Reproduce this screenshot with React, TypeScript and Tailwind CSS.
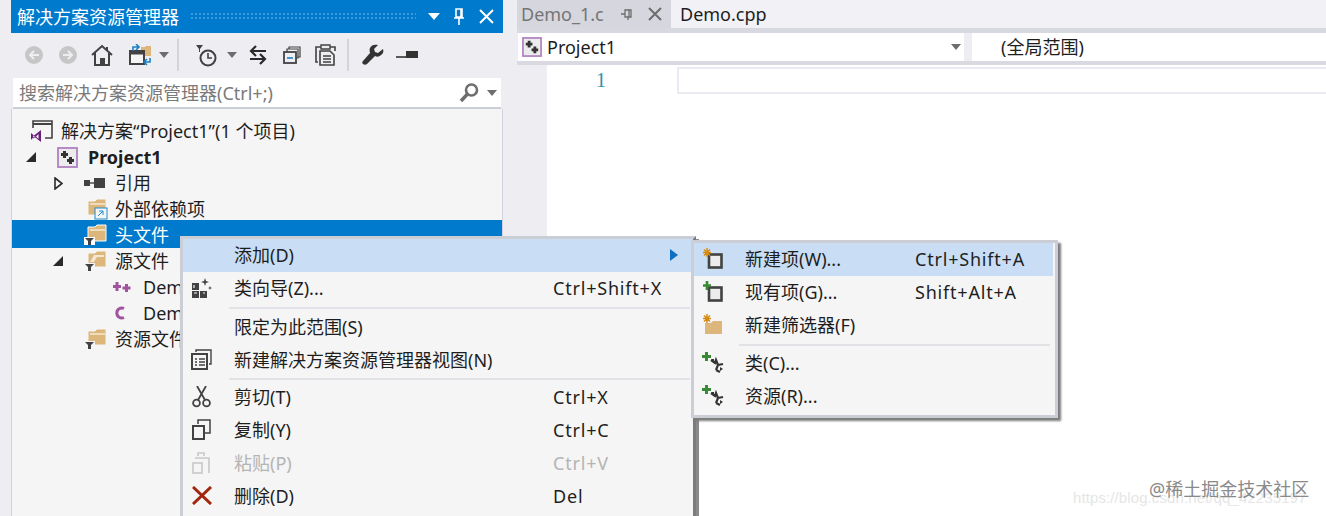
import React from "react";

const D = "#424242";
const FONT = 'font-["Noto_Sans","Noto_Sans_CJK_SC",sans-serif]';

function Caret({ x, c = "#6d6d6d" }: { x: string; c?: string }) {
  return (
    <svg width="10" height="6" viewBox="0 0 10 6" className={x}>
      <path d="M0 0h10L5 6z" fill={c} />
    </svg>
  );
}

function Folder({
  filter,
  link,
  selected,
  open,
}: {
  filter?: boolean;
  link?: boolean;
  selected?: boolean;
  open?: boolean;
}) {
  return (
    <svg width="24" height="22" viewBox="0 0 24 22">
      <path d="M4 3h7l2-2h9v16H4z" fill="#dcb67a" stroke={selected ? "#fff" : "#f5f5f5"} strokeWidth="1" />
      {open ? (
        <path d="M6 12l4-7h10v2h-7l-3 5z" fill="#f3e7d2" />
      ) : (
        <path d="M6 6h15" stroke="#efdcbb" strokeWidth="2" />
      )}
      {filter && (
        <>
          <rect x="0" y="13" width="11" height="8" fill={selected ? "#fff" : "#f5f5f5"} />
          <path d="M1 14h9L7 17v4H4v-4z" fill="#424242" />
        </>
      )}
      {link && (
        <>
          <rect x="11" y="10" width="12" height="11" fill="#f5f5f5" stroke="#1f8ad2" />
          <path d="M14 18l5-5M15 13h4v4" stroke="#1f8ad2" fill="none" />
        </>
      )}
    </svg>
  );
}

function ProjectIcon({ size = 21 }: { size?: number }) {
  return (
    <svg width={size} height={size} viewBox="0 0 21 21">
      <rect x="1" y="1" width="19" height="19" fill="#ececec" stroke="#b180c0" strokeWidth="1.800" />
      <path d="M7.500 4v7M4 7.500h7M13.500 10v7M10 13.500h7" stroke="#333" strokeWidth="3" />
    </svg>
  );
}

function BranchPlus() {
  return (
    <svg width="22" height="21" viewBox="0 0 22 21">
      <path d="M4.500 0v9M0 4.500h9" stroke="#388a34" strokeWidth="3" />
      <path d="M9 8l4 3 1-3 2 5-2 5M14 18l4 2M16 13l5-1" stroke="#333" strokeWidth="2.200" fill="none" />
      <path d="M9 7l3 0 0 3zM18 15l3 2-3 2z" fill="#333" />
    </svg>
  );
}

function TreeRow({
  pad,
  arrow,
  icon,
  label,
  cls = "",
}: {
  pad: string;
  arrow?: React.ReactNode;
  icon: React.ReactNode;
  label: React.ReactNode;
  cls?: string;
}) {
  return (
    <div className={`h-[26px] flex items-center ${pad} ${cls}`}>
      <div className="w-[10px] -ml-[31px] mr-[21px] shrink-0 flex justify-center">{arrow}</div>
      <div className="w-[31px] shrink-0 flex justify-start">{icon}</div>
      <span className="whitespace-nowrap">{label}</span>
    </div>
  );
}

const Solid = () => (
  <svg width="10" height="10" viewBox="0 0 10 10" className="shrink-0">
    <path d="M10 0v10H0z" fill="#2a2a2a" />
  </svg>
);

function MenuRow({
  icon,
  label,
  sc,
  active,
  disabled,
  w,
  arrow,
}: {
  icon?: React.ReactNode;
  label: string;
  sc?: string;
  active?: boolean;
  disabled?: boolean;
  w: string;
  arrow?: boolean;
}) {
  return (
    <div
      className={`h-[33px] pb-[2px] flex items-center relative ${active ? "bg-[#c9def5]" : ""} ${
        disabled ? "text-[#b4b4b4]" : "text-[#1e1e1e]"
      }`}
    >
      <div className="w-[37px] mr-[14px] shrink-0 flex justify-center">{icon}</div>
      <div className={`${w} shrink-0 whitespace-nowrap`}>{label}</div>
      <div className="whitespace-nowrap tracking-[0.8px]">{sc}</div>
      {arrow && (
        <svg width="8" height="12" viewBox="0 0 8 12" className="absolute right-[15px] top-[10px]">
          <path d="M0 0l8 6-8 6z" fill="#0e70c0" />
        </svg>
      )}
    </div>
  );
}

const Sep = ({ ml, h }: { ml: string; h: string }) => (
  <div className={`${h} flex items-center ${ml} mr-[3px]`}>
    <div className="h-[2px] w-full bg-[#e2e2e6]" />
  </div>
);

export default function App() {
  return (
    <div className={`relative w-[1326px] h-[516px] overflow-hidden flex bg-[#eeeef2] text-[18px] leading-[26px] text-[#1e1e1e] ${FONT}`}>
      {/* left panel */}
      <div className="ml-[11px] w-[492px] h-full flex flex-col shrink-0">
        <div className="h-[33px] bg-[#007acc] flex items-center text-white">
          <span className="ml-[6px] whitespace-nowrap">解决方案资源管理器</span>
          <div className="ml-[11px] w-[226px] h-[9px] bg-[radial-gradient(#3f9bd8_1px,transparent_1px)] bg-[length:4px_4px]" />
          <svg width="12" height="7" viewBox="0 0 12 7" className="ml-[12px]">
            <path d="M0 0h12L6 7z" fill="#fff" />
          </svg>
          <svg width="12" height="18" viewBox="0 0 12 18" className="ml-[13px]">
            <path d="M3 1h6v8H3zM1 10h10M6 10v7M8 1v8" stroke="#fff" strokeWidth="1.600" fill="none" />
          </svg>
          <svg width="15" height="15" viewBox="0 0 15 15" className="ml-[14px]">
            <path d="M1 1l13 13M14 1L1 14" stroke="#fff" strokeWidth="2" />
          </svg>
        </div>
        {/* toolbar */}
        <div className="h-[44px] flex items-center pl-[14px]">
          <svg width="18" height="18" viewBox="0 0 18 18">
            <circle cx="9" cy="9" r="9" fill="#c6c6c6" />
            <path d="M14 9H6M9 5L5 9l4 4" stroke="#eeeef2" strokeWidth="2" fill="none" />
          </svg>
          <svg width="18" height="18" viewBox="0 0 18 18" className="ml-[16px]">
            <circle cx="9" cy="9" r="9" fill="#c6c6c6" />
            <path d="M4 9h8M9 5l4 4-4 4" stroke="#eeeef2" strokeWidth="2" fill="none" />
          </svg>
          <svg width="22" height="22" viewBox="0 0 22 22" className="ml-[14px]">
            <path d="M1 11L11 2l10 9M4 9v12h14V9" stroke={D} strokeWidth="2" fill="none" />
            <rect x="9" y="14" width="5" height="7" fill={D} />
            <path d="M16 3v4" stroke={D} strokeWidth="2" />
          </svg>
          <svg width="24" height="22" viewBox="0 0 24 22" className="ml-[16px]">
            <path d="M12 3h4l1-1h5v10H12z" fill="#dcb67a" />
            <rect x="1" y="7" width="14" height="13" fill="#f5f5f5" stroke={D} strokeWidth="2" />
            <path d="M1 9h14" stroke={D} strokeWidth="3" />
            <path d="M4 7V3h5M7 0l3 3-3 3" stroke="#1b7fc4" strokeWidth="1.600" fill="none" />
            <path d="M21 14v4h-5M18 15l-3 3 3 3" stroke="#1b7fc4" strokeWidth="1.600" fill="none" />
          </svg>
          <Caret x="ml-[6px]" />
          <div className="ml-[8px] w-[2px] h-[32px] bg-[#d4d4da]" />
          <svg width="22" height="24" viewBox="0 0 22 24" className="ml-[17px] mt-[2px]">
            <path d="M0 1h7L4 5v3H3V5z" fill={D} />
            <circle cx="12" cy="14" r="7.500" stroke={D} strokeWidth="2" fill="none" />
            <path d="M12 9v5h4" stroke={D} strokeWidth="1.600" fill="none" />
          </svg>
          <Caret x="ml-[9px]" />
          <svg width="18" height="20" viewBox="0 0 18 20" className="ml-[12px]">
            <path d="M17 6H3M7 1L2 6l5 5" stroke="#2a2a2a" strokeWidth="2.200" fill="none" />
            <path d="M1 14h14M11 9l5 5-5 5" stroke="#2a2a2a" strokeWidth="2.200" fill="none" />
          </svg>
          <svg width="18" height="18" viewBox="0 0 18 18" className="ml-[16px]">
            <path d="M6 3V1h11v10h-2" stroke={D} strokeWidth="1.200" fill="none" />
            <path d="M4 6V3h11v9h-2" stroke={D} strokeWidth="1.200" fill="none" />
            <rect x="1" y="6" width="12" height="11" fill="#eeeef2" stroke={D} strokeWidth="1.800" />
            <path d="M4 12h6" stroke="#1b7fc4" strokeWidth="1.600" />
          </svg>
          <svg width="21" height="22" viewBox="0 0 21 22" className="ml-[14px]">
            <path d="M3 18H1V3h5M15 3h5v4" stroke={D} strokeWidth="1.600" fill="none" />
            <path d="M6 1h9v4H6z" stroke={D} strokeWidth="1.400" fill="none" />
            <path d="M5 7h10l4 4v10H5z" fill="#eeeef2" stroke={D} strokeWidth="1.600" />
            <path d="M8 12h8M8 15h8M8 18h8" stroke={D} strokeWidth="1.300" />
          </svg>
          <div className="ml-[11px] w-[2px] h-[32px] bg-[#d4d4da]" />
          <svg width="22" height="22" viewBox="0 0 22 22" className="ml-[13px]">
            <path
              d="M21 5l-5 4-3-1-1-3 4-4c-3-1-7 0-8 3-1 2 0 4 0 5L1 17c-1 1-1 2 0 3s3 1 4 0l8-8c2 1 4 1 6-1 2-1 3-4 2-6z"
              fill="#333"
            />
          </svg>
          <svg width="22" height="8" viewBox="0 0 22 8" className="ml-[12px]">
            <path d="M0 6h10" stroke="#333" strokeWidth="1.600" />
            <rect x="10" y="0" width="12" height="7" fill="#333" />
          </svg>
        </div>
        {/* search */}
        <div className="mt-[1px] mx-[2px] h-[31px] bg-white border-b-[2px] border-[#ccced6] flex items-center text-[#7a7a7a]">
          <span className="ml-[6px] whitespace-nowrap">搜索解决方案资源管理器(Ctrl+;)</span>
          <svg width="20" height="20" viewBox="0 0 20 20" className="ml-auto">
            <circle cx="12.500" cy="7" r="5.500" stroke="#6d6d6d" strokeWidth="2.600" fill="none" />
            <path d="M8.500 11L2 18" stroke="#6d6d6d" strokeWidth="3.400" />
          </svg>
          <Caret x="ml-[8px] mr-[4px]" />
        </div>
        {/* tree */}
        <div className="flex-1 bg-[#f5f5f5] pt-[9px] border-x border-[#d2d3df]">
          <TreeRow
            pad="pl-[18px]"
            icon={
              <svg width="23" height="23" viewBox="0 0 23 23">
                <path d="M3 8V1h19v17h-7" stroke="#424242" strokeWidth="1.600" fill="none" />
                <path d="M3 4h19" stroke="#424242" strokeWidth="2" />
                <path d="M1 13l3 2.500L11 10v12l-7-5.500L1 20zM3 15.500v3l2.500-1.500zM8.500 14L6 16.500 8.500 19z" fill="#68217a" fillRule="evenodd" />
              </svg>
            }
            label="解决方案“Project1”(1 个项目)"
          />
          <TreeRow
            pad="pl-[45px]"
            arrow={<Solid />}
            icon={<ProjectIcon />}
            label={<b className="font-bold">Project1</b>}
          />
          <TreeRow
            pad="pl-[72px]"
            arrow={
              <svg width="9" height="13" viewBox="0 0 9 13" className="shrink-0">
                <path d="M1 1l7 5.500L1 12z" fill="none" stroke="#2a2a2a" strokeWidth="1.600" />
              </svg>
            }
            icon={
              <svg width="22" height="10" viewBox="0 0 22 10">
                <rect x="0" y="2" width="6" height="6" fill={D} />
                <path d="M6 5h4" stroke={D} strokeWidth="1.400" />
                <rect x="10" y="0" width="11" height="10" fill={D} />
              </svg>
            }
            label="引用"
          />
          <TreeRow pad="pl-[72px]" icon={<Folder link />} label="外部依赖项" />
          <div className="-mt-[2px] pt-[2px] bg-[#007acc] text-white">
            <TreeRow pad="pl-[72px]" icon={<Folder filter selected />} label="头文件" />
          </div>
          <TreeRow pad="pl-[72px]" arrow={<Solid />} icon={<Folder filter open />} label="源文件" />
          <TreeRow
            pad="pl-[100px]"
            icon={
              <svg width="20" height="12" viewBox="0 0 20 12">
                <path d="M5 1v9M1 5.500h8M14.500 3v8M10.500 7h8" stroke="#a0549f" strokeWidth="3" />
              </svg>
            }
            label="Demo.cpp"
          />
          <TreeRow
            pad="pl-[100px]"
            icon={
              <svg width="18" height="16" viewBox="0 0 18 16">
                <path d="M12 3.500A5 5 0 1 0 12 12.500" stroke="#a0549f" strokeWidth="3" fill="none" />
              </svg>
            }
            label="Demo_1.c"
          />
          <TreeRow pad="pl-[72px]" icon={<Folder filter />} label="资源文件" />
        </div>
      </div>

      {/* editor */}
      <div className="ml-[14px] flex-1 flex flex-col min-w-0">
        <div className="h-[28px] flex items-center shrink-0 bg-[#f1f1f6]">
          <div className="w-[154px] h-full shrink-0 flex items-center bg-[#d6d6df] text-[#757575]">
            <span className="ml-[4px] whitespace-nowrap">Demo_1.c</span>
            <svg width="14" height="12" viewBox="0 0 14 12" className="ml-[16px] shrink-0">
              <path d="M1 6h4M5 2h6v7H5zM9 2v7M8 9v3" stroke="#6d6d6d" strokeWidth="1.300" fill="none" />
            </svg>
            <svg width="14" height="14" viewBox="0 0 14 14" className="ml-[14px] shrink-0">
              <path d="M1 1l12 12M13 1L1 13" stroke="#6d6d6d" strokeWidth="2" />
            </svg>
          </div>
          <span className="ml-[9px] whitespace-nowrap">Demo.cpp</span>
        </div>
        <div className="h-[33px] shrink-0 flex gap-[8px] border-t-[5px] border-[#d8d8e0]">
          <div className="w-[446px] bg-white flex items-center h-[28px] ml-[1px]">
            <div className="ml-[4px] flex">
              <ProjectIcon size={20} />
            </div>
            <span className="ml-[5px]">Project1</span>
            <Caret x="ml-auto mr-[3px]" />
          </div>
          <div className="flex-1 bg-white flex items-center h-[28px]">
            <span className="ml-[29px] whitespace-nowrap">(全局范围)</span>
          </div>
        </div>
        <div className="h-[4px] bg-[#d9d9e2] shrink-0" />
        <div className="flex-1 flex bg-white">
          <div className="w-[30px] bg-[#eeeef2] shrink-0" />
          <div className="flex-1 relative">
            <div className="w-[59px] pt-[2px] text-right text-[#2b91af] font-['Liberation_Serif',serif] text-[20px]">1</div>
            <div className="absolute left-[130px] right-0 top-[2px] h-[27px] border-2 border-[#eaeaf2] border-r-0" />
          </div>
        </div>
      </div>

      {/* context menu */}
      <div className="absolute left-[180px] top-[236px] w-[516px] h-[290px] bg-[#f5f5f5] border-[3px] border-[#ccced6] border-r-[#7c7c7c] shadow-[3px_3px_0_#8a8a8a]">
        <MenuRow active arrow w="w-[319px]" label="添加(D)" />
        <MenuRow
          w="w-[319px]"
          label="类向导(Z)..."
          sc="Ctrl+Shift+X"
          icon={
            <svg width="20" height="21" viewBox="0 0 20 21">
              <rect x="0" y="6" width="7" height="7" fill={D} />
              <rect x="0" y="14" width="7" height="7" fill={D} />
              <rect x="8" y="14" width="7" height="7" fill={D} />
              <path d="M2 8v3M2 16h3M11 16h2" stroke="#f5f5f5" strokeWidth="1.200" />
              <path d="M13 1l1 3 3 1-3 1-1 3-1-3-3-1 3-1zM18 9l.6 1.400 1.400.6-1.400.6-.6 1.400-.6-1.400-1.400-.6 1.400-.6z" fill={D} />
            </svg>
          }
        />
        <Sep ml="ml-[46px]" h="h-[6px]" />
        <MenuRow w="w-[319px]" label="限定为此范围(S)" />
        <MenuRow
          w="w-[319px]"
          label="新建解决方案资源管理器视图(N)"
          icon={
            <svg width="21" height="21" viewBox="0 0 21 21">
              <path d="M5 3V1h15v14h-2" stroke={D} strokeWidth="1.400" fill="none" />
              <rect x="1" y="5" width="15" height="15" fill="#f5f5f5" stroke={D} strokeWidth="2" />
              <path d="M4 10h2M8 10h6M4 13h2M8 13h6M4 16h2M8 16h6" stroke={D} strokeWidth="1.500" />
            </svg>
          }
        />
        <Sep ml="ml-[46px]" h="h-[4px]" />
        <MenuRow
          w="w-[319px]"
          label="剪切(T)"
          sc="Ctrl+X"
          icon={
            <svg width="19" height="22" viewBox="0 0 19 22">
              <path d="M5 0l8 14M14 0L6 14" stroke={D} strokeWidth="1.800" />
              <circle cx="4.500" cy="17" r="3.400" stroke={D} strokeWidth="1.800" fill="none" />
              <circle cx="14.500" cy="17" r="3.400" stroke={D} strokeWidth="1.800" fill="none" />
            </svg>
          }
        />
        <MenuRow
          w="w-[319px]"
          label="复制(Y)"
          sc="Ctrl+C"
          icon={
            <svg width="19" height="21" viewBox="0 0 19 21">
              <path d="M6 5V1h12v13h-5" stroke={D} strokeWidth="1.500" fill="none" />
              <rect x="1" y="7" width="11" height="13" fill="none" stroke={D} strokeWidth="2" />
            </svg>
          }
        />
        <MenuRow
          disabled
          w="w-[319px]"
          label="粘贴(P)"
          sc="Ctrl+V"
          icon={
            <svg width="19" height="22" viewBox="0 0 19 22">
              <path d="M6 4V1h6v3M3 6h14v15" stroke="#c8c8c8" strokeWidth="1.600" fill="none" />
              <rect x="1" y="11" width="9" height="10" fill="none" stroke="#c8c8c8" strokeWidth="1.600" />
            </svg>
          }
        />
        <MenuRow
          w="w-[319px]"
          label="删除(D)"
          sc="Del"
          icon={
            <svg width="20" height="19" viewBox="0 0 20 19">
              <path d="M1 1l18 17M19 1L1 18" stroke="#a1260d" strokeWidth="3" />
            </svg>
          }
        />
      </div>

      {/* submenu */}
      <div className="absolute left-[691px] top-[240px] w-[367px] h-[178px] bg-[#f5f5f5] border-[3px] border-[#ccced6] pr-[2px] shadow-[3px_3px_2px_#7c7c7c]">
        <MenuRow active w="w-[170px]" label="新建项(W)..." sc="Ctrl+Shift+A" icon={<NewItem star />} />
        <MenuRow w="w-[170px]" label="现有项(G)..." sc="Shift+Alt+A" icon={<NewItem />} />
        <MenuRow
          w="w-[170px]"
          label="新建筛选器(F)"
          icon={
            <svg width="21" height="21" viewBox="0 0 21 21">
              <path d="M3 9h6l2-2h9v13H3z" fill="#dcb67a" />
              <path d="M5 0v9M1 4.500h8M2 1.500l6 6M8 1.500l-6 6" stroke="#d68a10" strokeWidth="1.400" />
            </svg>
          }
        />
        <Sep ml="ml-[45px]" h="h-[5px]" />
        <MenuRow w="w-[170px]" label="类(C)..." icon={<BranchPlus />} />
        <MenuRow w="w-[170px]" label="资源(R)..." icon={<BranchPlus />} />
      </div>

      {/* watermark */}
      <div className="absolute left-[1073px] top-[488px] text-[15px] leading-[20px] tracking-[0.1px] text-[#e6e6e6] font-['Liberation_Sans',sans-serif] whitespace-nowrap">
        https://blog.csdn.net/qq_42235197
      </div>
      <div className="absolute left-[1149px] top-[477px] text-[18px] leading-[24px] text-[#8a8a8a] whitespace-nowrap">
        @稀土掘金技术社区
      </div>
    </div>
  );
}

function NewItem({ star }: { star?: boolean }) {
  return (
    <svg width="21" height="21" viewBox="0 0 21 21">
      <rect x="7" y="6.500" width="12.500" height="13" fill="#ececec" stroke="#424242" strokeWidth="2.600" />
      {star ? (
        <path d="M5 0v9M1 4.500h8M2 1.500l6 6M8 1.500l-6 6" stroke="#d68a10" strokeWidth="1.400" />
      ) : (
        <path d="M5 0v9M1 4.500h8" stroke="#388a34" strokeWidth="2.600" />
      )}
    </svg>
  );
}
